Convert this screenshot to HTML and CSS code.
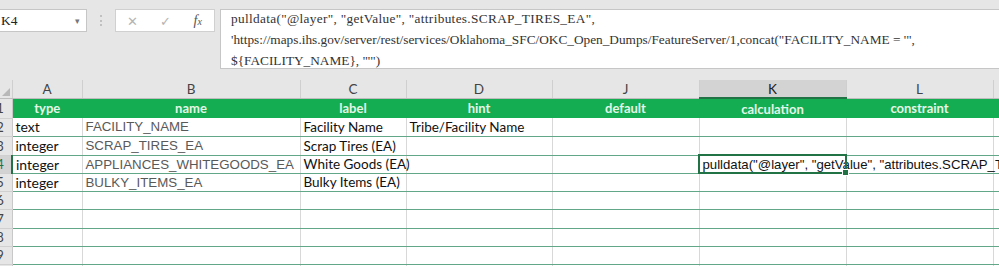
FILE: index.html
```html
<!DOCTYPE html>
<html lang="en">
<head>
    <meta charset="UTF-8">
    <meta name="viewport" content="width=device-width, initial-scale=1.0">
    <title>XLSForm - survey</title>
    <link rel="stylesheet" href="styles.css">
</head>
<body>
    <!-- formula bar -->
    <div class="toolbar">
        <div class="namebox">
            <span>K4</span>
            <span class="drop">&#9662;</span>
        </div>
        <div class="grip"><span></span></div>
        <div class="fx-buttons">
            <span class="btn cancel">&#10005;</span>
            <span class="btn enter">&#10003;</span>
            <span class="btn fx"><i>f</i><small>x</small></span>
        </div>
        <div class="formula">
            <div class="formula-text">
                <span class="first-line">pulldata("@layer", "getValue", "attributes.SCRAP_TIRES_EA",</span><br>
                'https://maps.ihs.gov/server/rest/services/Oklahoma_SFC/OKC_Open_Dumps/FeatureServer/1,concat("FACILITY_NAME = '",<br>
                ${FACILITY_NAME}, "'")
            </div>
        </div>
    </div>

    <!-- worksheet -->
    <div class="sheet-wrap">
        <table class="sheet">
            <colgroup>
                <col class="c-rn">
                <col class="c-a">
                <col class="c-b">
                <col class="c-c">
                <col class="c-d">
                <col class="c-w">
                <col class="c-w">
                <col class="c-w">
                <col class="c-rest">
            </colgroup>
            <tr class="col-heads">
                <th class="corner"><span></span></th>
                <th>A</th>
                <th>B</th>
                <th>C</th>
                <th>D</th>
                <th>J</th>
                <th class="active">K</th>
                <th>L</th>
                <th></th>
            </tr>
            <tr class="hdr">
                <th class="rn"><span>1</span></th>
                <td>type</td>
                <td>name</td>
                <td>label</td>
                <td>hint</td>
                <td>default</td>
                <td>calculation</td>
                <td>constraint</td>
                <td></td>
            </tr>
            <tr>
                <th class="rn"><span>2</span></th>
                <td>text</td>
                <td class="nm">FACILITY_NAME</td>
                <td class="lb">Facility Name</td>
                <td class="lb">Tribe/Facility Name</td>
                <td></td>
                <td></td>
                <td></td>
                <td></td>
            </tr>
            <tr class="tall">
                <th class="rn"><span>3</span></th>
                <td>integer</td>
                <td class="nm">SCRAP_TIRES_EA</td>
                <td class="lb">Scrap Tires (EA)</td>
                <td></td>
                <td></td>
                <td></td>
                <td></td>
                <td></td>
            </tr>
            <tr>
                <th class="rn active"><span>4</span></th>
                <td>integer</td>
                <td class="nm">APPLIANCES_WHITEGOODS_EA</td>
                <td class="lb">White Goods (EA)</td>
                <td></td>
                <td></td>
                <td class="sel">pulldata("@layer", "getValue", "attributes.SCRAP_TIRES_EA", 'https://maps.ihs.gov/server/rest/services/Oklahoma_SFC/OKC_Open_Dumps/FeatureServer/1,concat("FACILITY_NAME = '", ${FACILITY_NAME}, "'")</td>
                <td></td>
                <td></td>
            </tr>
            <tr>
                <th class="rn"><span>5</span></th>
                <td>integer</td>
                <td class="nm">BULKY_ITEMS_EA</td>
                <td class="lb">Bulky Items (EA)</td>
                <td></td>
                <td></td>
                <td></td>
                <td></td>
                <td></td>
            </tr>
            <tr>
                <th class="rn"><span>6</span></th>
                <td></td><td></td><td></td><td></td><td></td><td></td><td></td><td></td>
            </tr>
            <tr class="tall">
                <th class="rn"><span>7</span></th>
                <td></td><td></td><td></td><td></td><td></td><td></td><td></td><td></td>
            </tr>
            <tr>
                <th class="rn"><span>8</span></th>
                <td></td><td></td><td></td><td></td><td></td><td></td><td></td><td></td>
            </tr>
            <tr>
                <th class="rn"><span>9</span></th>
                <td></td><td></td><td></td><td></td><td></td><td></td><td></td><td></td>
            </tr>
            <tr>
                <th class="rn"><span>10</span></th>
                <td></td><td></td><td></td><td></td><td></td><td></td><td></td><td></td>
            </tr>
        </table>
    </div>
</body>
</html>
```

FILE: styles.css
```css
html, body {
    margin: 0;
    overflow: hidden;
    background: #fff;
}
body {
    width: 999px;
    height: 266px;
    font-family: "Lato", "Open Sans", sans-serif;
}

/* formula bar */
.toolbar {
    display: flex;
    align-items: flex-start;
    height: 80px;
    box-sizing: border-box;
    padding-top: 9px;
    background-color: #e6e6e6;
}
.namebox {
    display: flex;
    flex-shrink: 0;
    justify-content: space-between;
    align-items: center;
    width: 87px;
    height: 23px;
    box-sizing: border-box;
    padding: 0 6px 0 1px;
    background-color: #fff;
    border: 1px solid #c6c6c6;
    border-left: none;
    font-family: "Liberation Serif", serif;
    font-size: 13.5px;
    color: #222;
}
.namebox .drop {
    font-size: 9px;
    color: #777;
}
.grip {
    display: flex;
    flex-shrink: 0;
    justify-content: center;
    width: 28px;
    padding-top: 6px;
}
.grip span {
    width: 0;
    height: 11px;
    border-left: 2px dotted #c0c0c0;
}
.fx-buttons {
    display: flex;
    flex-shrink: 0;
    align-items: center;
    width: 100px;
    height: 23px;
    box-sizing: border-box;
    background-color: #fff;
    border: 1px solid #d0d0d0;
}
.fx-buttons .btn {
    flex: 1;
    text-align: center;
    color: #b4b4b4;
    font-size: 13px;
}
.fx-buttons .fx {
    color: #555;
    font-family: "Liberation Serif", serif;
    font-size: 14px;
}
.fx-buttons .fx small {
    font-size: 10px;
    font-style: italic;
}
.formula {
    flex: 1;
    min-width: 0;
    height: 60px;
    box-sizing: border-box;
    margin-left: 5px;
    padding: 0 10px;
    overflow: hidden;
    background-color: #fff;
    border: 1px solid #c6c6c6;
    border-right: none;
    font-family: "Liberation Serif", serif;
    font-size: 13.3px;
    line-height: 21px;
    color: #333;
    white-space: nowrap;
}
.formula-text {
    margin-top: -2px;
}
.formula .first-line {
    letter-spacing: 0.33px;
}

/* worksheet */
.sheet-wrap {
    overflow: hidden;
}
.sheet {
    table-layout: fixed;
    border-collapse: collapse;
    width: 1100px;
}
.c-rn { width: 12px; }
.c-a { width: 70px; }
.c-b { width: 218px; }
.c-c { width: 106px; }
.c-d { width: 146px; }
.c-w { width: 147px; }
.c-rest { width: 153px; }

.sheet th, .sheet td {
    padding: 0 3px;
    height: 17px;
    white-space: nowrap;
    font-weight: normal;
    text-align: left;
    font-size: 14px;
    color: #111;
    border-right: 1px solid #d8d8d8;
    border-bottom: 1px solid #62a888;
}
.sheet .tall th, .sheet .tall td {
    height: 18px;
}
.col-heads th {
    height: 17px;
    background-color: #e6e6e6;
    color: #444;
    text-align: center;
    font-size: 13.5px;
    border-right: 1px solid #cfcfcf;
    border-bottom: 1px solid #bdbdbd;
}
.col-heads th.active {
    background-color: #d3d3d3;
    color: #222;
    border-bottom: 2px solid #217346;
}
.corner {
    position: relative;
}
.corner span {
    position: absolute;
    right: 2px;
    bottom: 2px;
    border-left: 8px solid transparent;
    border-bottom: 8px solid #b8b8b8;
}
.sheet .rn {
    padding: 0;
    overflow: hidden;
    background-color: #e6e6e6;
    color: #444;
    font-size: 13px;
    border-right: 1px solid #c8c8c8;
    border-bottom: 1px solid #d0d0d0;
}
.rn span {
    display: block;
    width: 16px;
    margin-left: -8px;
    text-align: center;
}
.sheet .rn.active {
    background-color: #d3d3d3;
    color: #217346;
    border-right: 2px solid #217346;
}
.sheet .hdr td {
    background-color: #14ad52;
    color: #e3f6e8;
    font-weight: bold;
    font-size: 13px;
    text-align: center;
    height: 19px;
    border-right: none;
    border-bottom: none;
}
.sheet td.nm {
    font-family: "Liberation Sans", Arial, sans-serif;
    font-size: 13.3px;
    color: #595959;
}
.sheet td.lb {
    font-size: 13.5px;
}
.sheet td.sel {
    position: relative;
    overflow: visible;
    font-family: "Liberation Sans", Arial, sans-serif;
    font-size: 13.2px;
    color: #111;
    outline: 2px solid #217346;
    outline-offset: -1px;
}
.sel::after {
    content: "";
    position: absolute;
    right: -3px;
    bottom: -3px;
    width: 5px;
    height: 5px;
    background-color: #217346;
    border: 1px solid #fff;
}
```
